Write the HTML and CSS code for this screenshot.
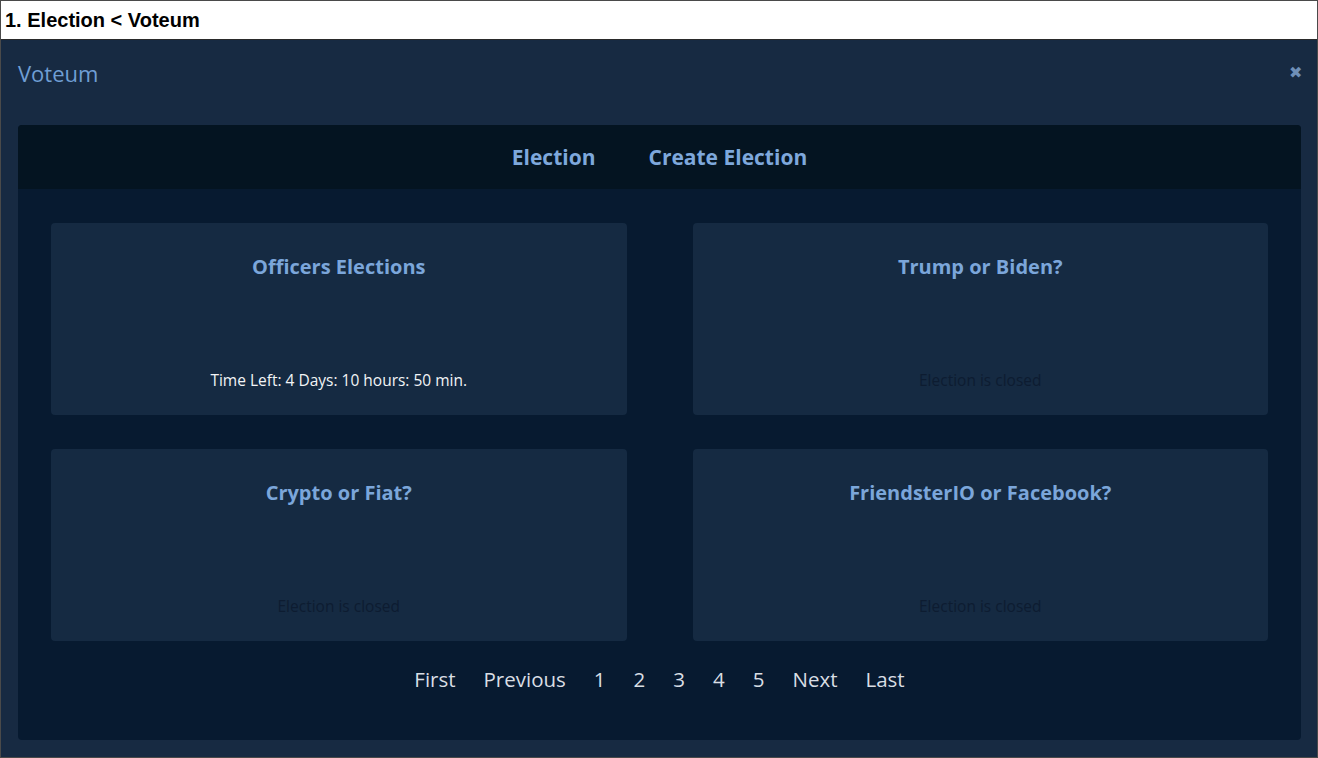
FILE: index.html
```html
<!DOCTYPE html>
<html lang="en">
<head>
  <meta charset="UTF-8">
  <meta name="viewport" content="width=device-width, initial-scale=1.0">
  <title>Election &lt; Voteum</title>
  <link rel="stylesheet" href="styles.css">
</head>
<body>
  <div class="window">
    <div class="titlebar">1. Election &lt; Voteum</div>

    <div class="app">
      <div class="app-header">
        <span class="brand">Voteum</span>
        <span class="close">&#10006;</span>
      </div>

      <div class="panel">
        <nav class="tabs">
          <a href="#">Election</a>
          <a href="#">Create Election</a>
        </nav>

        <div class="panel-body">
          <div class="cards">
            <div class="card">
              <h2>Officers Elections</h2>
              <p class="time-left">Time Left: 4 Days: 10 hours: 50 min.</p>
            </div>
            <div class="card">
              <h2>Trump or Biden?</h2>
              <p class="closed">Election is closed</p>
            </div>
            <div class="card">
              <h2>Crypto or Fiat?</h2>
              <p class="closed">Election is closed</p>
            </div>
            <div class="card">
              <h2>FriendsterIO or Facebook?</h2>
              <p class="closed">Election is closed</p>
            </div>
          </div>

          <div class="pagination">
            <a href="#">First</a>
            <a href="#">Previous</a>
            <a href="#">1</a>
            <a href="#">2</a>
            <a href="#">3</a>
            <a href="#">4</a>
            <a href="#">5</a>
            <a href="#">Next</a>
            <a href="#">Last</a>
          </div>
        </div>
      </div>
    </div>
  </div>
</body>
</html>
```

FILE: styles.css
```css
html, body {
  margin: 0;
  padding: 0;
  height: 100%;
}

body {
  font-family: 'Open Sans', sans-serif;
  background: #fff;
}

.window {
  height: 100%;
  box-sizing: border-box;
  border: 1px solid #4a4a4a;
  display: flex;
  flex-direction: column;
}

.titlebar {
  height: 38px;
  line-height: 38px;
  padding-left: 4px;
  font-family: 'Liberation Sans', Arial, sans-serif;
  font-weight: bold;
  font-size: 20px;
  color: #000;
  background: #fff;
  border-bottom: 1px solid #2a2a2a;
}

.app {
  flex: 1;
  background: #172a42;
  padding: 0 16px 0 17px;
}

.app-header {
  height: 85px;
  display: flex;
  align-items: center;
  justify-content: space-between;
}

.brand {
  font-size: 22px;
  color: #6f9ed4;
  margin-top: -20px;
}

.close {
  font-size: 16px;
  color: #6f8fb7;
  margin-right: -1px;
  margin-top: -22px;
}

.panel {
  border-radius: 4px;
  overflow: hidden;
  background: #071a30;
}

.tabs {
  height: 64px;
  background: #041421;
  display: flex;
  justify-content: center;
  align-items: center;
  gap: 53px;
}

.tabs a {
  color: #7ea8dc;
  font-weight: bold;
  font-size: 21px;
  text-decoration: none;
}

.panel-body {
  padding: 34px 33px 47px;
}

.cards {
  display: grid;
  grid-template-columns: 1fr 1fr;
  column-gap: 66px;
  row-gap: 34px;
}

.card {
  height: 192px;
  box-sizing: border-box;
  background: #152a42;
  border-radius: 4px;
  padding: 30px 16px 24px;
  display: flex;
  flex-direction: column;
  justify-content: space-between;
  align-items: center;
}

.card h2 {
  margin: 0;
  font-size: 20px;
  line-height: 27px;
  color: #7ba6da;
  font-weight: bold;
}

.card p {
  margin: 0;
  font-size: 15.5px;
  line-height: 21px;
}

.time-left {
  color: #f2f4f6;
}

.closed {
  color: #0d1c31;
}

.pagination {
  margin-top: 25px;
  display: flex;
  justify-content: center;
}

.pagination a {
  color: #d9dee4;
  font-size: 20.5px;
  line-height: 27px;
  padding: 0 14px;
  text-decoration: none;
}
```
